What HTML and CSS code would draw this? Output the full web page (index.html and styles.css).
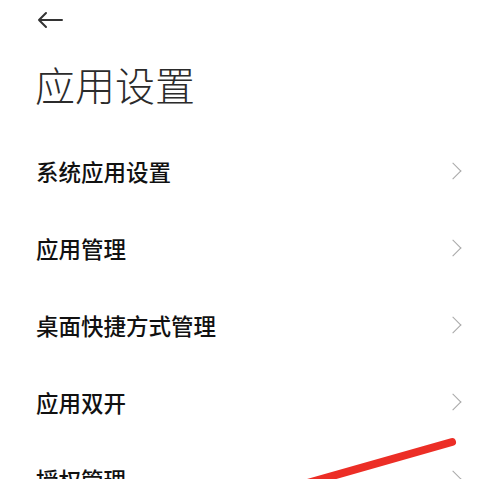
FILE: index.html
```html
<!DOCTYPE html>
<html lang="zh-CN">
<head>
<meta charset="utf-8">
<link rel="stylesheet" href="styles.css">
</head>
<body>
<div class="page">
  <div class="topbar">
    <svg class="back" width="28" height="18" viewBox="0 0 28 18">
      <path d="M26 9H3M10 2L3 9l7 7" fill="none" stroke="#333" stroke-width="2" stroke-linecap="round" stroke-linejoin="round"/>
    </svg>
  </div>
  <h1 class="title">应用设置</h1>
  <ul class="list">
    <li class="row"><span class="label">系统应用设置</span><span class="chev"></span></li>
    <li class="row"><span class="label">应用管理</span><span class="chev"></span></li>
    <li class="row"><span class="label">桌面快捷方式管理</span><span class="chev"></span></li>
    <li class="row"><span class="label">应用双开</span><span class="chev"></span></li>
    <li class="row"><span class="label">授权管理</span><span class="chev"></span></li>
  </ul>
  <svg class="mark" width="500" height="479" viewBox="0 0 500 479">
    <line x1="452" y1="442" x2="290" y2="488" stroke="#ec2e26" stroke-width="8" stroke-linecap="round"/>
  </svg>
</div>
</body>
</html>
```
FILE: styles.css
```css
html, body {
  margin: 0;
  padding: 0;
  background: #fff;
}
.page {
  position: relative;
  width: 500px;
  height: 479px;
  overflow: hidden;
  font-family: "Noto Sans CJK SC", "Noto Sans", sans-serif;
  color: #1a1a1a;
}
.topbar {
  height: 40px;
  padding-left: 36px;
  display: flex;
  align-items: center;
}
.back {
  display: block;
}
.title {
  margin: -4px 0 0 0;
  padding: 0 0 0 35px;
  height: 96px;
  display: flex;
  align-items: center;
  font-size: 40px;
  font-weight: 300;
  color: #2b2b2b;
  letter-spacing: 0;
}
.list {
  list-style: none;
  margin: 0;
  padding: 0;
}
.row {
  height: 77px;
  display: flex;
  align-items: center;
  justify-content: space-between;
  padding: 0 37px 0 36px;
}
.label {
  font-size: 22.5px;
  font-weight: 500;
  color: #111;
}
.chev {
  width: 11px;
  height: 11px;
  border-top: 1.5px solid #a8a8a8;
  border-right: 1.5px solid #a8a8a8;
  transform: rotate(45deg);
  margin-right: 4px;
}
.mark {
  position: absolute;
  left: 0;
  top: 0;
  pointer-events: none;
}
```
